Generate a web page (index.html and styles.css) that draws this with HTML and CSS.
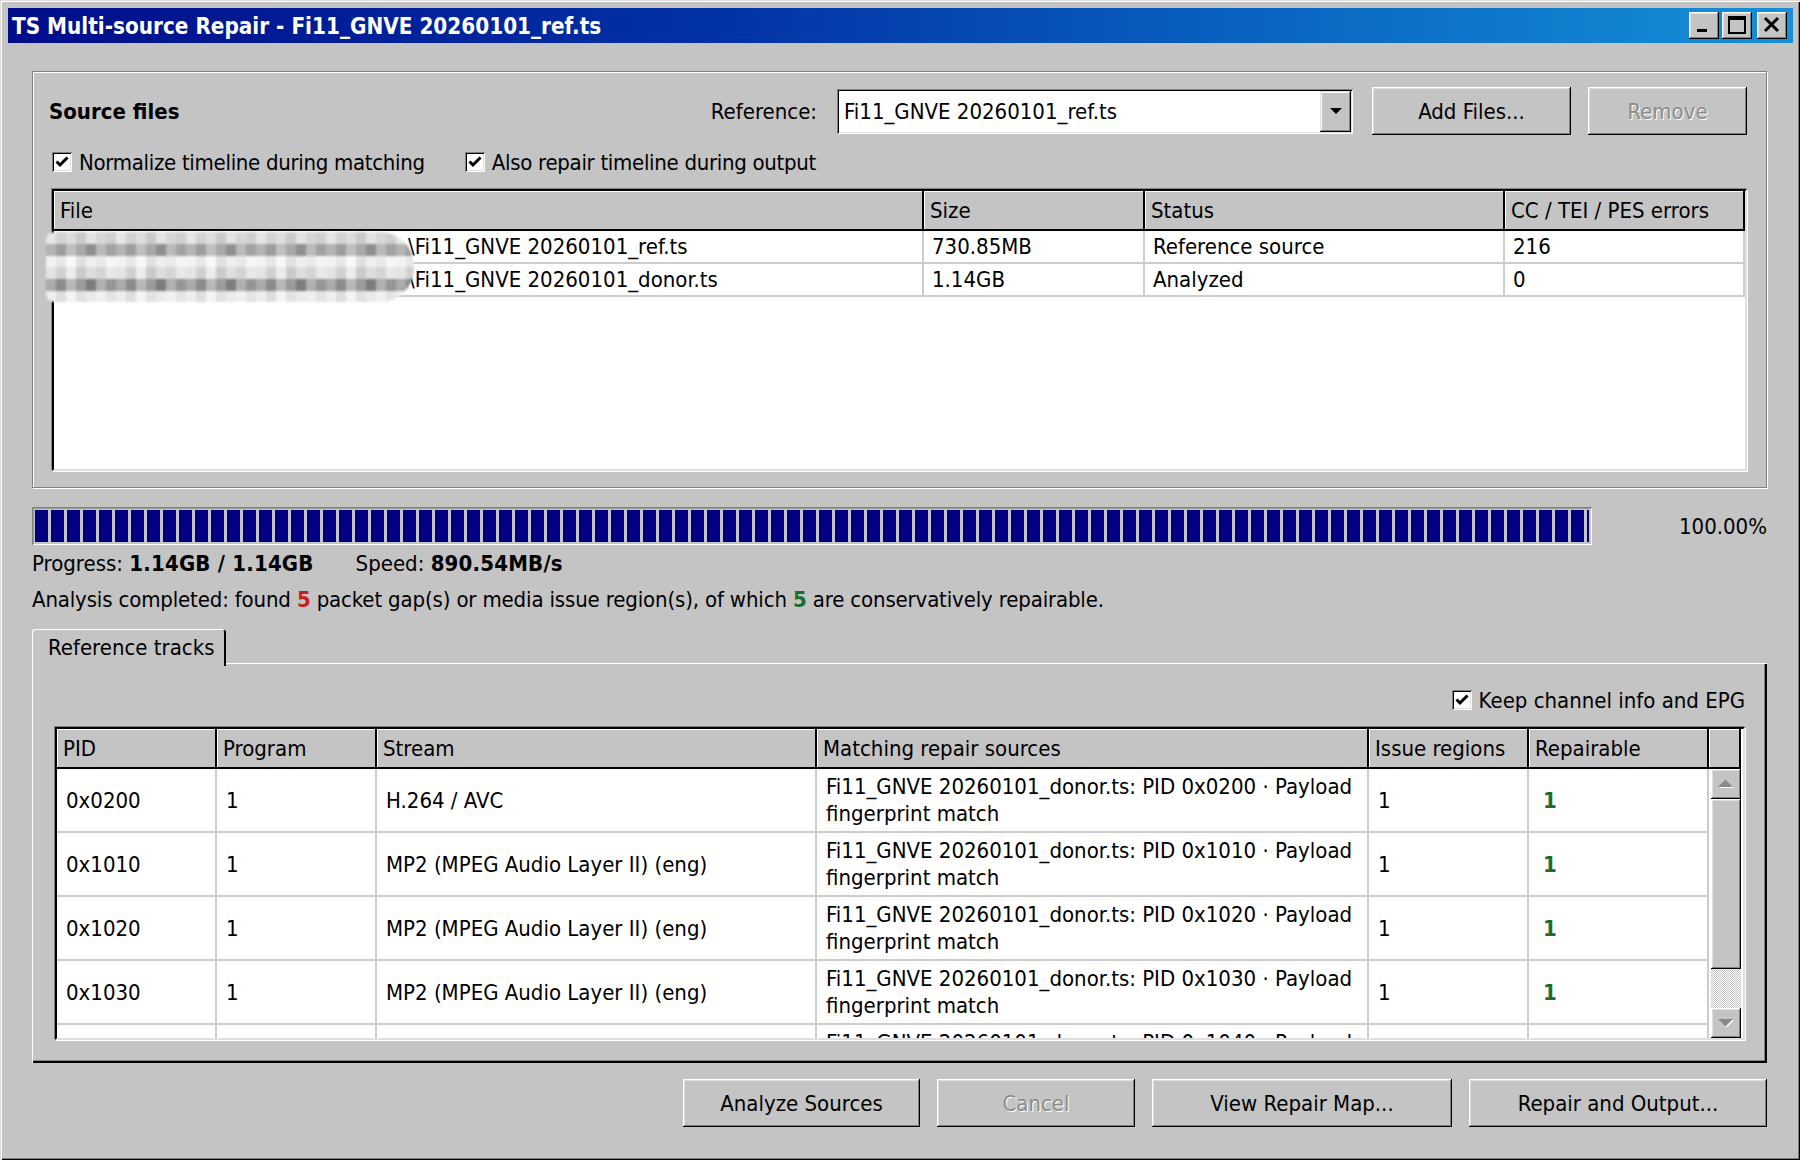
FILE: index.html
```html
<!DOCTYPE html>
<html lang="en">
<head>
    <meta charset="UTF-8">
    <title>TS Multi-source Repair</title>
    <link rel="stylesheet" href="styles.css">
</head>
<body>
<div class="window">
    <div class="titlebar">
        <span class="title">TS Multi-source Repair - Fi11_GNVE 20260101_ref.ts</span>
        <div class="caption-buttons">
            <span class="cap-btn"><svg width="30" height="27" viewBox="0 0 30 27"><rect x="8" y="17" width="10" height="3" fill="#000"/></svg></span>
            <span class="cap-btn"><svg width="30" height="27" viewBox="0 0 30 27"><rect x="7" y="5" width="16" height="16" fill="none" stroke="#000" stroke-width="2"/><rect x="7" y="5" width="16" height="3" fill="#000"/></svg></span>
            <span class="cap-btn close"><svg width="30" height="27" viewBox="0 0 30 27"><path d="M8 6 L21 19 M21 6 L8 19" stroke="#000" stroke-width="3"/></svg></span>
        </div>
    </div>

    <div class="content">
        <section class="groupbox">
            <div class="source-head">
                <h2>Source files</h2>
                <span class="ref-label">Reference:</span>
                <div class="combo">
                    <span class="combo-text">Fi11_GNVE 20260101_ref.ts</span>
                    <span class="combo-btn"><svg width="14" height="8" viewBox="0 0 14 8"><path d="M1 1 H13 L7 7 Z" fill="#000"/></svg></span>
                </div>
                <button class="btn btn-add">Add Files...</button>
                <button class="btn btn-remove" disabled>Remove</button>
            </div>

            <div class="options">
                <label class="check">
                    <span class="box"><svg width="18" height="18" viewBox="0 0 18 18"><path d="M3.5 8.5 L7 12 L14.5 4.5" fill="none" stroke="#000" stroke-width="3"/></svg></span>
                    Normalize timeline during matching
                </label>
                <label class="check">
                    <span class="box"><svg width="18" height="18" viewBox="0 0 18 18"><path d="M3.5 8.5 L7 12 L14.5 4.5" fill="none" stroke="#000" stroke-width="3"/></svg></span>
                    Also repair timeline during output
                </label>
            </div>

            <div class="filelist">
                <div class="list-head">
                    <div class="hcell">File</div>
                    <div class="hcell">Size</div>
                    <div class="hcell">Status</div>
                    <div class="hcell">CC / TEI / PES errors</div>
                </div>
                <div class="list-row">
                    <div class="cell file-cell">\Fi11_GNVE 20260101_ref.ts</div>
                    <div class="cell">730.85MB</div>
                    <div class="cell">Reference source</div>
                    <div class="cell">216</div>
                </div>
                <div class="list-row">
                    <div class="cell file-cell">\Fi11_GNVE 20260101_donor.ts</div>
                    <div class="cell">1.14GB</div>
                    <div class="cell">Analyzed</div>
                    <div class="cell">0</div>
                </div>
                <!-- mosaic over the folder part of the paths -->
                <div class="path-blur"></div>
            </div>
        </section>

        <div class="progress-row">
            <div class="progress"><div class="progress-fill"></div></div>
            <span class="percent">100.00%</span>
        </div>
        <p class="stats">Progress: <b>1.14GB / 1.14GB</b><span class="speed">Speed: <b>890.54MB/s</b></span></p>
        <p class="summary">Analysis completed: found <b class="red">5</b> packet gap(s) or media issue region(s), of which <b class="green">5</b> are conservatively repairable.</p>

        <div class="tabs">
            <div class="tab">Reference tracks</div>
        </div>
        <div class="tab-pane">
            <div class="pane-top">
                <label class="check">
                    <span class="box"><svg width="18" height="18" viewBox="0 0 18 18"><path d="M3.5 8.5 L7 12 L14.5 4.5" fill="none" stroke="#000" stroke-width="3"/></svg></span>
                    Keep channel info and EPG
                </label>
            </div>

            <div class="tracks">
                <div class="tracks-head">
                    <div class="hcell">PID</div>
                    <div class="hcell">Program</div>
                    <div class="hcell">Stream</div>
                    <div class="hcell">Matching repair sources</div>
                    <div class="hcell">Issue regions</div>
                    <div class="hcell">Repairable</div>
                    <div class="hcell"></div>
                </div>
                <div class="tracks-body">
                    <div class="tracks-rows">
                        <div class="track-row">
                            <div class="cell">0x0200</div>
                            <div class="cell">1</div>
                            <div class="cell">H.264 / AVC</div>
                            <div class="cell">Fi11_GNVE 20260101_donor.ts: PID 0x0200 · Payload fingerprint match</div>
                            <div class="cell">1</div>
                            <div class="cell ok">1</div>
                        </div>
                        <div class="track-row">
                            <div class="cell">0x1010</div>
                            <div class="cell">1</div>
                            <div class="cell">MP2 (MPEG Audio Layer II) (eng)</div>
                            <div class="cell">Fi11_GNVE 20260101_donor.ts: PID 0x1010 · Payload fingerprint match</div>
                            <div class="cell">1</div>
                            <div class="cell ok">1</div>
                        </div>
                        <div class="track-row">
                            <div class="cell">0x1020</div>
                            <div class="cell">1</div>
                            <div class="cell">MP2 (MPEG Audio Layer II) (eng)</div>
                            <div class="cell">Fi11_GNVE 20260101_donor.ts: PID 0x1020 · Payload fingerprint match</div>
                            <div class="cell">1</div>
                            <div class="cell ok">1</div>
                        </div>
                        <div class="track-row">
                            <div class="cell">0x1030</div>
                            <div class="cell">1</div>
                            <div class="cell">MP2 (MPEG Audio Layer II) (eng)</div>
                            <div class="cell">Fi11_GNVE 20260101_donor.ts: PID 0x1030 · Payload fingerprint match</div>
                            <div class="cell">1</div>
                            <div class="cell ok">1</div>
                        </div>
                        <div class="track-row">
                            <div class="cell">0x1040</div>
                            <div class="cell">1</div>
                            <div class="cell">MP2 (MPEG Audio Layer II) (eng)</div>
                            <div class="cell">Fi11_GNVE 20260101_donor.ts: PID 0x1040 · Payload fingerprint match</div>
                            <div class="cell">1</div>
                            <div class="cell ok">1</div>
                        </div>
                    </div>
                    <div class="scrollbar">
                        <span class="sb-btn"><svg width="18" height="10" viewBox="0 0 18 10"><path d="M2 9 H17 L9.5 1.5 Z" fill="#fff"/><path d="M1 8 H16 L8.5 0.5 Z" fill="#8a8a8a"/></svg></span>
                        <span class="sb-thumb"></span>
                        <span class="sb-track"></span>
                        <span class="sb-btn"><svg width="18" height="10" viewBox="0 0 18 10"><path d="M2 2 H17 L9.5 9.5 Z" fill="#fff"/><path d="M1 1 H16 L8.5 8.5 Z" fill="#8a8a8a"/></svg></span>
                    </div>
                </div>
            </div>
        </div>

        <div class="actions">
            <button class="btn btn-analyze">Analyze Sources</button>
            <button class="btn btn-cancel" disabled>Cancel</button>
            <button class="btn btn-map">View Repair Map...</button>
            <button class="btn btn-repair">Repair and Output...</button>
        </div>
    </div>
</div>
</body>
</html>
```

FILE: styles.css
```css
html, body {
    margin: 0;
    padding: 0;
    background: #c4c4c4;
}

body {
    font-family: "DejaVu Sans Condensed", "Liberation Sans", sans-serif;
    font-size: 22px;
    color: #000;
}

.window {
    width: 1800px;
    height: 1160px;
    box-sizing: border-box;
    padding: 8px 7px 0 8px;
    background: #c4c4c4;
    box-shadow: inset 1px 1px #dcdcdc, inset 2px 2px #fff, inset -1px -1px #000, inset -2px -2px #808080;
    display: flex;
    flex-direction: column;
}

/* title bar */
.titlebar {
    height: 35px;
    display: flex;
    align-items: center;
    justify-content: space-between;
    background: linear-gradient(90deg, #000d8a 0%, #0232a6 40%, #0b6cc4 75%, #1690d8 100%);
    padding: 0 6px 0 4px;
}

.title {
    color: #fff;
    font-weight: bold;
    font-size: 22.3px;
}

.caption-buttons {
    display: flex;
    align-items: center;
}

.cap-btn {
    display: block;
    width: 30px;
    height: 27px;
    margin-left: 3px;
    background: #c4c4c4;
    box-shadow: inset -1px -1px #000, inset 1px 1px #fff, inset -2px -2px #808080, inset 2px 2px #dfdfdf;
}

.cap-btn svg {
    display: block;
}

.cap-btn.close {
    margin-left: 5px;
}

.content {
    flex-grow: 1;
    padding: 28px 26px 0 24px;
    display: flex;
    flex-direction: column;
}

/* group box */
.groupbox {
    height: 417px;
    box-sizing: border-box;
    border: 1px solid #808080;
    box-shadow: inset 1px 1px #fff, 1px 1px #fff;
    padding: 15px 19px 0 19px;
}

.source-head {
    display: flex;
    align-items: center;
    height: 48px;
}

.source-head h2 {
    margin: 0 0 0 -3px;
    font-size: 22px;
    font-weight: bold;
    flex-grow: 1;
}

.ref-label {
    margin-right: 20px;
}

.combo {
    width: 516px;
    height: 45px;
    box-sizing: border-box;
    display: flex;
    align-items: stretch;
    background: #fff;
    box-shadow: inset 1px 1px #808080, inset -1px -1px #fff, inset 2px 2px #000, inset -2px -2px #dfdfdf;
    padding: 2px;
    margin-right: 19px;
}

.combo-text {
    flex-grow: 1;
    padding-left: 5px;
    display: flex;
    align-items: center;
}

.combo-btn {
    width: 31px;
    background: #c4c4c4;
    box-shadow: inset -1px -1px #000, inset 1px 1px #dfdfdf, inset -2px -2px #808080, inset 2px 2px #fff;
    display: flex;
    align-items: center;
    justify-content: center;
}

.btn {
    font-family: inherit;
    font-size: 22px;
    color: #000;
    background: #c4c4c4;
    border: none;
    height: 48px;
    padding: 0;
    box-shadow: inset -1px -1px #000, inset 1px 1px #fff, inset -2px -2px #808080, inset 2px 2px #dfdfdf;
}

.btn:disabled {
    color: #8c8c8c;
    text-shadow: 1px 1px #fff;
}

.btn-add {
    width: 199px;
    margin-right: 17px;
}

.btn-remove {
    width: 159px;
}

.options {
    display: flex;
    align-items: center;
    height: 26px;
    margin-top: 14px;
    letter-spacing: -0.3px;
}

.check {
    display: flex;
    align-items: center;
    margin-right: 40px;
}

.box {
    width: 20px;
    height: 20px;
    margin-right: 7px;
    background: #fff;
    box-shadow: inset 1px 1px #808080, inset -1px -1px #fff, inset 2px 2px #000, inset -2px -2px #dfdfdf;
    display: flex;
    align-items: center;
    justify-content: center;
}

.box svg {
    display: block;
}

/* file list */
.filelist {
    position: relative;
    margin-top: 14px;
    height: 282px;
    box-sizing: border-box;
    border-top: 2px solid #000;
    border-left: 2px solid #000;
    border-right: 2px solid #dfdfdf;
    border-bottom: 2px solid #dfdfdf;
    box-shadow: -1px -1px #808080, 1px 1px #fff;
    background: #fff;
}

.list-head,
.list-row {
    display: grid;
    grid-template-columns: 870px 221px 360px 240px;
}

.list-head {
    height: 40px;
}

.hcell {
    background: #c4c4c4;
    box-shadow: inset 1px 1px #fff;
    border-right: 2px solid #000;
    border-bottom: 2px solid #000;
    padding-left: 6px;
    display: flex;
    align-items: center;
    white-space: nowrap;
    overflow: hidden;
}

.list-row {
    height: 33px;
}

.list-row .cell {
    border-right: 2px solid #cdcdcd;
    border-bottom: 2px solid #cdcdcd;
    padding-left: 8px;
    display: flex;
    align-items: center;
    white-space: nowrap;
}

.list-row .file-cell {
    padding-left: 354px;
}

.path-blur {
    position: absolute;
    left: -8px;
    top: 41px;
    width: 368px;
    height: 70px;
    border-radius: 8px 34px 34px 8px;
    filter: blur(0.9px);
    background:
        repeating-linear-gradient(90deg, #e6e6e6 0 10px, #d2d2d2 10px 20px, #dddddd 20px 30px, #c9c9c9 30px 40px, #e3e3e3 40px 50px, #d6d6d6 50px 60px, #cfcfcf 60px 70px) 0 0 / 100% 12px no-repeat,
        repeating-linear-gradient(90deg, #b4b4b4 0 10px, #9d9d9d 10px 20px, #c0c0c0 20px 30px, #a8a8a8 30px 40px, #8f8f8f 40px 50px, #bababa 50px 60px, #a2a2a2 60px 70px) 0 12px / 100% 12px no-repeat,
        repeating-linear-gradient(90deg, #f2f2f2 0 10px, #e7e7e7 10px 20px, #f8f8f8 20px 30px, #e0e0e0 30px 40px, #efefef 40px 50px, #e9e9e9 50px 60px, #f5f5f5 60px 70px) 0 24px / 100% 11px no-repeat,
        repeating-linear-gradient(90deg, #e4e4e4 0 10px, #d0d0d0 10px 20px, #ececec 20px 30px, #cacaca 30px 40px, #dedede 40px 50px, #d4d4d4 50px 60px, #e8e8e8 60px 70px) 0 35px / 100% 12px no-repeat,
        repeating-linear-gradient(90deg, #aaaaaa 0 10px, #8b8b8b 10px 20px, #b8b8b8 20px 30px, #9b9b9b 30px 40px, #7d7d7d 40px 50px, #b0b0b0 50px 60px, #959595 60px 70px) 0 47px / 100% 12px no-repeat,
        repeating-linear-gradient(90deg, #eeeeee 0 10px, #dedede 10px 20px, #f4f4f4 20px 30px, #e2e2e2 30px 40px, #ebebeb 40px 50px, #f0f0f0 50px 60px, #e4e4e4 60px 70px) 0 59px / 100% 11px no-repeat;
}

/* progress */
.progress-row {
    display: flex;
    align-items: center;
    margin-top: 19px;
}

.progress {
    width: 1560px;
    height: 38px;
    box-sizing: border-box;
    padding: 3px;
    box-shadow: inset 1px 1px #808080, inset -1px -1px #fff, inset 2px 2px #9a9a9a;
}

.progress-fill {
    height: 100%;
    background: repeating-linear-gradient(90deg, #000080 0 13px, transparent 13px 16px);
}

.percent {
    flex-grow: 1;
    text-align: right;
}

.stats,
.summary {
    margin: 0;
    line-height: 28px;
}

.stats {
    margin-top: 5px;
}

.stats b {
    letter-spacing: 0.2px;
}

.speed {
    margin-left: 42px;
}

.summary {
    margin-top: 8px;
    letter-spacing: -0.15px;
}

.red {
    color: #c8201e;
}

.green {
    color: #1b6e2a;
}

/* tabs */
.tabs {
    display: flex;
    margin-top: 15px;
    position: relative;
    z-index: 1;
}

.tab {
    width: 194px;
    height: 37px;
    box-sizing: border-box;
    padding-left: 16px;
    display: flex;
    align-items: center;
    background: #c4c4c4;
    border-radius: 3px 3px 0 0;
    box-shadow: inset 1px 1px #fff, inset -2px 0 #000;
    margin-bottom: -3px;
}

.tab-pane {
    height: 400px;
    box-sizing: border-box;
    box-shadow: inset 1px 1px #fff, inset -2px -2px #000, inset -3px -3px #808080;
    padding: 24px 22px 0 23px;
}

.pane-top {
    display: flex;
    justify-content: flex-end;
    height: 26px;
}

.pane-top .check {
    margin-right: 0;
}

.tracks {
    margin-top: 14px;
    height: 313px;
    box-sizing: border-box;
    border-top: 2px solid #000;
    border-left: 2px solid #000;
    border-right: 2px solid #dfdfdf;
    border-bottom: 2px solid #dfdfdf;
    box-shadow: -1px -1px #808080, 1px 1px #fff;
    background: #fff;
    display: flex;
    flex-direction: column;
}

.tracks-head {
    display: grid;
    grid-template-columns: 160px 160px 440px 552px 160px 180px 32px;
    height: 40px;
    flex-shrink: 0;
}

.tracks-body {
    display: flex;
    flex-grow: 1;
    overflow: hidden;
}

.tracks-rows {
    width: 1652px;
    overflow: hidden;
}

.track-row {
    display: grid;
    grid-template-columns: 160px 160px 440px 552px 160px 180px;
    height: 64px;
}

.track-row .cell {
    border-right: 2px solid #cdcdcd;
    border-bottom: 2px solid #cdcdcd;
    padding-left: 9px;
    padding-right: 6px;
    display: flex;
    align-items: center;
    line-height: 27px;
}

.track-row .ok {
    color: #1b6e2a;
    font-weight: bold;
    padding-left: 14px;
}

.scrollbar {
    width: 30px;
    display: flex;
    flex-direction: column;
    margin-left: 2px;
}

.sb-btn {
    height: 30px;
    flex-shrink: 0;
    background: #c4c4c4;
    box-shadow: inset -1px -1px #000, inset 1px 1px #fff, inset -2px -2px #808080, inset 2px 2px #dfdfdf;
    display: flex;
    align-items: center;
    justify-content: center;
}

.sb-thumb {
    height: 170px;
    flex-shrink: 0;
    background: #c4c4c4;
    box-shadow: inset -1px -1px #000, inset 1px 1px #fff, inset -2px -2px #808080, inset 2px 2px #dfdfdf;
}

.sb-track {
    flex-grow: 1;
    background: repeating-conic-gradient(#fff 0 25%, #c4c4c4 0 50%) 0 0 / 2px 2px;
}

/* bottom buttons */
.actions {
    display: flex;
    justify-content: flex-end;
    gap: 17px;
    margin-top: 16px;
}

.btn-analyze {
    width: 237px;
}

.btn-cancel {
    width: 198px;
}

.btn-map {
    width: 300px;
}

.btn-repair {
    width: 298px;
}
```
